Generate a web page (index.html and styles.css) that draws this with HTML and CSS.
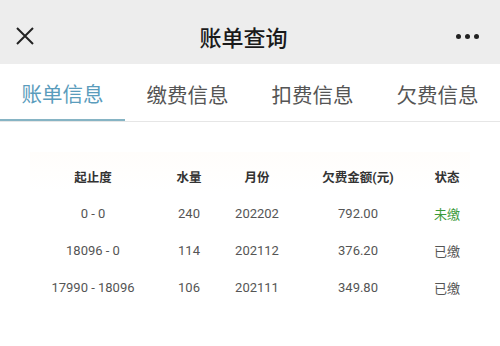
FILE: index.html
```html
<!DOCTYPE html>
<html lang="zh-CN">

<head>
  <meta charset="UTF-8">
  <meta name="viewport" content="width=device-width, initial-scale=1.0">
  <title>账单查询</title>
  <link rel="stylesheet" href="styles.css">
</head>

<body>
  <!-- Barra do topo -->
  <div class="top-bar">
    <span class="close">
      <svg width="18" height="18" viewBox="0 0 18 18">
        <path d="M1 1 L17 17 M17 1 L1 17" stroke="#222" stroke-width="2" fill="none" />
      </svg>
    </span>
    <span class="title">账单查询</span>
    <span class="more"><i></i><i></i><i></i></span>
  </div>

  <!-- Abas -->
  <div class="tabs">
    <div class="tab active">账单信息</div>
    <div class="tab">缴费信息</div>
    <div class="tab">扣费信息</div>
    <div class="tab">欠费信息</div>
  </div>

  <!-- Tabela -->
  <div class="bill-table">
    <div class="row head">
      <span>起止度</span>
      <span>水量</span>
      <span>月份</span>
      <span>欠费金额(元)</span>
      <span>状态</span>
    </div>
    <div class="row">
      <span>0 - 0</span>
      <span>240</span>
      <span>202202</span>
      <span>792.00</span>
      <span class="unpaid">未缴</span>
    </div>
    <div class="row">
      <span>18096 - 0</span>
      <span>114</span>
      <span>202112</span>
      <span>376.20</span>
      <span>已缴</span>
    </div>
    <div class="row">
      <span>17990 - 18096</span>
      <span>106</span>
      <span>202111</span>
      <span>349.80</span>
      <span>已缴</span>
    </div>
  </div>
</body>

</html>
```

FILE: styles.css
```css
body {
  margin: 0;
  font-family: Roboto, "Noto Sans CJK SC", sans-serif;
  background: #fff;
  color: #333;
}

.top-bar {
  height: 64px;
  background: #ededed;
  display: grid;
  grid-template-columns: 1fr auto 1fr;
  align-items: center;
  padding: 8px 21px 0 16px;
  box-sizing: border-box;
}

.close {
  width: 18px;
  height: 18px;
  display: flex;
}

.title {
  font-size: 22px;
  font-weight: 500;
  color: #1a1a1a;
  margin-left: -8px;
}

.more {
  display: flex;
  gap: 4px;
  justify-self: end;
}

.more i {
  width: 5px;
  height: 5px;
  border-radius: 50%;
  background: #222;
}

.tabs {
  display: flex;
  height: 57px;
  border-bottom: 1px solid #e6e6e6;
}

.tab {
  flex: 1;
  display: flex;
  align-items: center;
  justify-content: center;
  font-size: 20.5px;
  color: #555;
  padding-top: 2px;
  box-sizing: border-box;
}

.tab.active {
  color: #5a9cbc;
  border-bottom: 2px solid #86b4c4;
}

.bill-table {
  margin: 30px 30px 0 30px;
  padding-top: 6px;
  background: linear-gradient(#fffdfb, #fff 40px);
}

.row {
  display: grid;
  grid-template-columns: 126px 66px 70px 132px 46px;
  height: 37px;
  align-items: center;
  font-size: 13px;
  color: #555;
}

.row span {
  text-align: center;
}

.row.head {
  font-weight: bold;
  color: #333;
  font-size: 12.5px;
}

.unpaid {
  color: #3c9a3c;
}
```
